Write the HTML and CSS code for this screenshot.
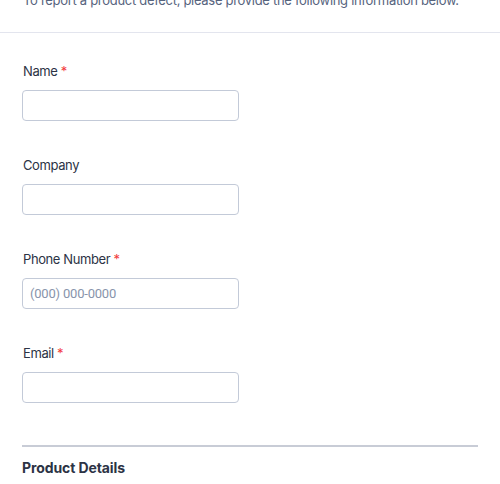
FILE: index.html
```html
<!DOCTYPE html>
<html lang="en">
<head>
<meta charset="utf-8">
<title>Product Defect Report</title>
<link rel="stylesheet" href="styles.css">
</head>
<body>
<div class="page">
  <header class="intro">
    <p class="intro-text">To report a product defect, please provide the following information below.</p>
  </header>
  <form class="form">
    <div class="field">
      <label class="label" for="name">Name <span class="req">*</span></label>
      <input class="input" id="name" type="text">
    </div>
    <div class="field">
      <label class="label" for="company">Company</label>
      <input class="input" id="company" type="text">
    </div>
    <div class="field">
      <label class="label" for="phone">Phone Number <span class="req">*</span></label>
      <input class="input" id="phone" type="tel" placeholder="(000) 000-0000">
    </div>
    <div class="field">
      <label class="label" for="email">Email <span class="req">*</span></label>
      <input class="input" id="email" type="email">
    </div>
    <div class="section">
      <h2 class="section-title">Product Details</h2>
    </div>
  </form>
</div>
</body>
</html>
```
FILE: styles.css
```css
* { box-sizing: border-box; }
html, body {
  margin: 0;
  padding: 0;
  background: #ffffff;
  font-family: Inter, "Noto Sans", sans-serif;
  overflow: hidden;
}
.page {
  width: 500px;
}
.intro {
  margin-top: -10px;
  padding: 0 22px 22px 23px;
  border-bottom: 1px solid #e3e5ee;
}
.intro-text {
  margin: 0;
  font-size: 13px;
  letter-spacing: -0.3px;
  line-height: 20px;
  color: #57647e;
  white-space: nowrap;
}
.form {
  padding: 11px 22px 0 22px;
}
.field {
  display: flex;
  flex-direction: column;
  gap: 9px;
  padding: 17px 0;
}
.label {
  font-size: 13px;
  letter-spacing: -0.4px;
  line-height: 20px;
  color: #2c3345;
  padding-left: 1px;
}
.req {
  color: #f23a3c;
}
.input {
  width: 217px;
  height: 31px;
  border: 1px solid #c3cad8;
  border-radius: 4px;
  padding: 0 7px;
  font-family: Roboto, "Liberation Sans", sans-serif;
  font-size: 13px;
  letter-spacing: -0.2px;
  color: #2c3345;
  background: #ffffff;
}
.input::placeholder {
  color: #8894ab;
}
.section {
  margin-top: 25px;
  border-top: 2px solid #c8ccd6;
  padding-top: 11px;
}
.section-title {
  margin: 0;
  font-size: 14px;
  letter-spacing: -0.1px;
  line-height: 20px;
  font-weight: 700;
  color: #2c3345;
}
```
